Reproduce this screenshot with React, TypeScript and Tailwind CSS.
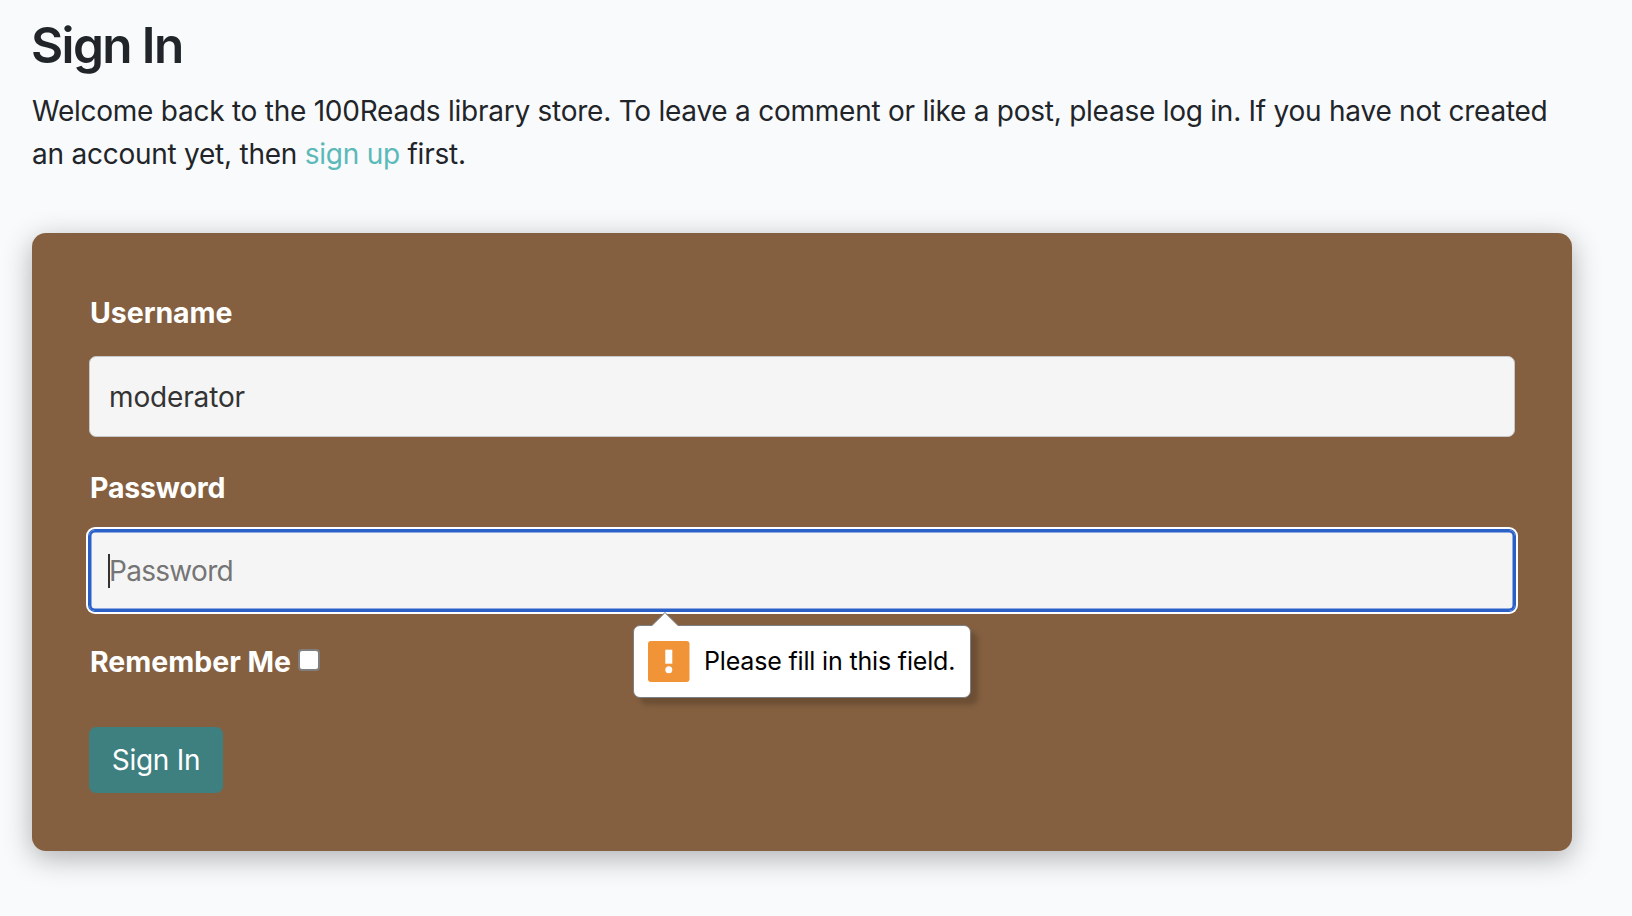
import React from "react";

function Tooltip() {
  return (
    <div
      role="alert"
      className="absolute left-[544px] top-[95px] flex h-[73px] w-[338px] items-center rounded-[7px] border border-[#7d7f82] bg-white pl-[14px] shadow-[7px_7px_5px_0px_rgba(0,0,0,0.18)]"
    >
      <svg className="absolute -top-[14px] left-[16px]" width="30" height="16" viewBox="0 0 30 16" fill="none">
        <path d="M2 14 L15 1 L28 14 V16 H2 Z" fill="#fff" />
        <path d="M1.5 13.5 L15 0.5 L28.5 13.5" stroke="#7d7f82" strokeWidth="1" />
      </svg>
      <svg width="42" height="41" viewBox="0 0 42 41">
        <rect width="41.5" height="41" rx="3" fill="#f19337" />
        <rect x="17.3" y="8.7" width="7" height="14" fill="#fff" />
        <circle cx="20.8" cy="28.8" r="3.5" fill="#fff" />
      </svg>
      <span className="mb-[2px] ml-[14px] whitespace-nowrap text-[25px] leading-[36px] tracking-[-0.17px] text-black">
        Please fill in this field.
      </span>
    </div>
  );
}

export default function App() {
  return (
    <main className="h-[916px] w-[1632px] overflow-hidden bg-[#f9fafc] px-8 pt-4 font-['Inter',sans-serif] text-[28px] leading-[43px] tracking-[-0.245px] text-[#212529]">
      <h1 className="-ml-px text-[49.5px] font-semibold leading-[58px] tracking-[-1.6px]">Sign In</h1>
      <p className="mt-4 whitespace-nowrap">
        Welcome back to the 100Reads library store. To leave a comment or like a post, please log in. If you have not created
        <br />
        an account yet, then <a href="#" className="text-[#5bb9b9]">sign up</a> first.
      </p>

      <form
        noValidate
        onSubmit={(e) => e.preventDefault()}
        className="mt-[57px] h-[618px] w-[1540px] rounded-[14px] bg-[#846040] px-[57px] pt-[58px] shadow-[0_7px_29px_rgba(0,0,0,0.3)]"
      >
        <label htmlFor="username" className="block pl-px text-[28.5px] font-bold tracking-[-0.05px] text-white">
          Username
        </label>
        <input
          id="username"
          defaultValue="moderator"
          className="mt-[22px] block h-[81px] w-full rounded-[7px] border border-[#c6c8cb] bg-[#f5f5f5] px-[19px] tracking-[-0.15px] text-[#333333] outline-none"
        />
        <label htmlFor="password" className="mt-[29px] block pl-px text-[28.5px] font-bold tracking-[-0.2px] text-white">
          Password
        </label>
        <div className="relative mt-[21px]">
          <input
            id="password"
            type="password"
            placeholder="Password"
            className="block h-[81px] w-full rounded-[6px] bg-[#f5f5f5] px-[20px] tracking-[-0.7px] shadow-[inset_0_0_0_2.5px_#2a60c8,0_0_0_1px_#2a60c8,0_0_0_3px_#ffffff] outline-none placeholder:text-[#757575] placeholder:opacity-100"
          />
          <span className="absolute left-[19px] top-[24px] h-[34px] w-[2px] bg-[#333333]" />
          <Tooltip />
        </div>
        <div className="mt-[29px] flex items-center">
          <label htmlFor="remember" className="pl-px text-[28.5px] font-bold tracking-[-0.02px] text-white">
            Remember Me
          </label>
          <input
            id="remember"
            type="checkbox"
            className="mb-[3px] ml-[7px] size-[22px] appearance-none rounded-[4px] border-2 border-[#807f7d] bg-white"
          />
        </div>
        <button className="mt-[44px] flex h-[66px] w-[134px] items-center justify-center rounded-[7px] bg-[#3e7f80] text-white">
          Sign In
        </button>
      </form>
    </main>
  );
}
